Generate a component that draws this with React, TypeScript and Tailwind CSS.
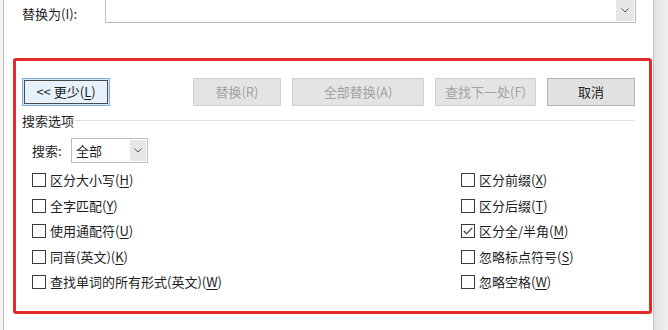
import React from "react";

const font = { fontFamily: '"Noto Sans CJK SC", "Noto Sans", sans-serif' };

function Chevron() {
  return (
    <svg width="8" height="5" viewBox="0 0 8 5" fill="none">
      <polyline points="0.5,0.5 4,4 7.5,0.5" stroke="#555" strokeWidth="1" />
    </svg>
  );
}

function Hot({ pre, k, post = ")" }: { pre: string; k: string; post?: string }) {
  return (
    <span>
      {pre}
      <span className="underline underline-offset-2">{k}</span>
      {post}
    </span>
  );
}

function Check({ checked, pre, k }: { checked?: boolean; pre: string; k: string }) {
  return (
    <div className="flex h-[25.5px] items-center">
      <div className="flex h-[14px] w-[14px] items-center justify-center border border-[#3a3a3a] bg-white">
        {checked && (
          <svg width="10" height="8" viewBox="0 0 10 8" fill="none">
            <polyline points="0.8,4 3.6,6.8 9.2,0.8" stroke="#222" strokeWidth="1.1" />
          </svg>
        )}
      </div>
      <span className="ml-[4px] text-[13px] leading-[18px] text-[#1e1e1e]">
        <Hot pre={pre} k={k} />
      </span>
    </div>
  );
}

function DisabledBtn({ w, label }: { w: string; label: string }) {
  return (
    <div
      className={`${w} flex h-[28px] items-center justify-center border border-[#cfcfcf] bg-[#e4e4e4] text-[13px] text-[#a2a2a2]`}
    >
      {label}
    </div>
  );
}

export default function App() {
  return (
    <div className="flex h-[330px] w-[668px] overflow-hidden bg-white" style={font}>
      <div className="w-[3px] bg-[#f3f3f3]" />
      <div className="w-px bg-[#bdbdbd]" />
      <div className="flex w-[649px] flex-col bg-white">
        {/* replace row */}
        <div className="flex h-[23px] items-start">
          <div className="w-[101px] pl-[18px] pt-[5px] text-[13px] leading-[18px] text-[#1e1e1e]">
            替换为(I):
          </div>
          <div className="-mt-[3px] flex h-[26px] w-[531px] justify-end border border-[#bcbcbc] bg-white p-px">
            <div className="flex w-[18px] items-center justify-center bg-[#e6e6e6]">
              <Chevron />
            </div>
          </div>
        </div>

        {/* red box */}
        <div className="ml-[9px] mt-[35px] flex h-[256px] w-[639px] flex-col rounded-[3px] border-[3px] border-[#e42a2a]">
          <div className="mt-[17px] flex h-[28px] pl-[6px] pr-[14px]">
            <div className="flex h-[28px] w-[88px] items-center justify-center border border-[#7aaedc] bg-[#e5f1fb] text-[13px] text-[#1e1e1e] shadow-[inset_0_0_0_1px_#dbe9f5,inset_0_0_0_2px_#4a4a4a]">
              <span>
                {"<< 更少("}
                <span className="underline underline-offset-2">L</span>)
              </span>
            </div>
            <div className="ml-auto flex gap-[11px]">
              <DisabledBtn w="w-[88px]" label="替换(R)" />
              <DisabledBtn w="w-[132px]" label="全部替换(A)" />
              <DisabledBtn w="w-[101px]" label="查找下一处(F)" />
              <div className="flex h-[28px] w-[88px] items-center justify-center border border-[#b4b4b4] bg-[#e1e1e1] text-[13px] text-[#1e1e1e]">
                取消
              </div>
            </div>
          </div>

          <div className="mt-[6px] flex h-[18px] items-center pl-[6px] pr-[14px]">
            <span className="text-[13px] leading-[18px] text-[#1e1e1e]">搜索选项</span>
            <div className="ml-[1px] mt-[-2px] h-px flex-1 bg-[#dedede]" />
          </div>

          <div className="mt-[8px] flex h-[25px] items-center pl-[16px]">
            <span className="w-[39px] text-[13px] leading-[18px] text-[#1e1e1e]">搜索:</span>
            <div className="flex h-[25px] w-[77px] border border-[#bdbdbd] bg-white p-px">
              <span className="flex-1 pl-[3px] text-[13px] leading-[21px] text-[#1e1e1e]">全部</span>
              <div className="flex w-[16px] items-center justify-center bg-[#e6e6e6]">
                <Chevron />
              </div>
            </div>
          </div>

          <div className="mt-[4.5px] flex pl-[16px]">
            <div className="flex w-[429px] flex-col">
              <Check pre="区分大小写(" k="H" />
              <Check pre="全字匹配(" k="Y" />
              <Check pre="使用通配符(" k="U" />
              <Check pre="同音(英文)(" k="K" />
              <Check pre="查找单词的所有形式(英文)(" k="W" />
            </div>
            <div className="flex flex-col">
              <Check pre="区分前缀(" k="X" />
              <Check pre="区分后缀(" k="T" />
              <Check checked pre="区分全/半角(" k="M" />
              <Check pre="忽略标点符号(" k="S" />
              <Check pre="忽略空格(" k="W" />
            </div>
          </div>
        </div>
      </div>
      <div className="w-px bg-[#c4c4c4]" />
      <div className="flex-1 bg-gradient-to-r from-[#e2e2e2] to-[#f0f0f0]" />
    </div>
  );
}
